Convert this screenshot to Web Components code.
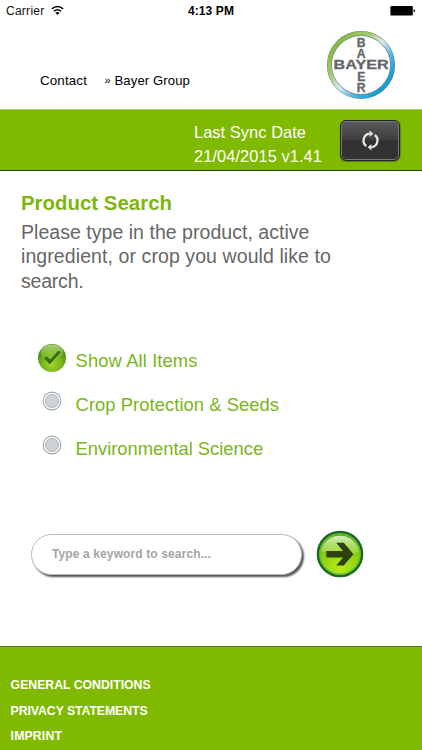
<!DOCTYPE html>
<html lang="en">
<head>
<meta charset="utf-8">
<title>Product Search</title>
<style>
html,body{margin:0;background:#fff}
body{font-family:"Liberation Sans",Arial,sans-serif;width:422px;height:750px;overflow:hidden}
</style>
</head>
<body>
<search-app></search-app>
<script>
const define=(name,html,ready)=>customElements.define(name,class extends HTMLElement{
  constructor(){super();this.attachShadow({mode:'open'}).innerHTML=html;}
  connectedCallback(){if(ready)ready.call(this);}
});

/* One line of text, tracked so that it fills the given measure. */
define('tracked-text',`<style>:host{display:block;white-space:nowrap}span{display:inline-block}</style><span><slot></slot></span>`,function(){
  const span=this.shadowRoot.querySelector('span');
  const n=this.textContent.length,w=span.getBoundingClientRect().width;
  if(this.hasAttribute('measure')&&w)span.style.letterSpacing=((+this.getAttribute('measure')-w)/n).toFixed(3)+'px';
});

define('status-bar',`<style>
:host{display:grid;grid-template-columns:1fr auto 1fr;height:22px;line-height:22px;font-size:12px;color:#111;padding:0 6px}
.l{display:flex;gap:6px}.t{font-weight:bold;color:#000}.r{display:flex;justify-content:flex-end}
svg{display:block}
</style>
<div class="l"><tracked-text measure="38.5">Carrier</tracked-text>
<svg width="13" height="22" viewBox="0 0 13 22" fill="none" stroke="#000" stroke-width="1.6"><path d="M.8 8.8Q6.5 4.2 12.2 8.8M3 11.1Q6.5 8.3 10 11.1"/><path d="M4.4 12.8Q6.5 11 8.6 12.8L6.5 15Z" fill="#000" stroke="none"/></svg></div>
<tracked-text class="t" measure="46">4:13 PM</tracked-text>
<div class="r"><svg width="26" height="22" viewBox="0 0 26 22"><rect x=".4" y="6" width="22.4" height="9.6" rx="1.2"/><path d="M23.6 9.3q1.5 .2 1.5 1.5t-1.5 1.5z"/></svg></div>`);

define('brand-logo',`<style>:host{display:block;width:70px;height:70px}svg{display:block}
text{font:bold 12.2px "Liberation Sans",Arial,sans-serif;fill:#63666a;stroke:#63666a;stroke-width:.3px}</style>
<svg width="70" height="70" viewBox="0 0 70 70">
<defs><linearGradient id="a" x1=".1" y1=".15" x2=".85" y2=".85"><stop offset="0" stop-color="#83b93c"/><stop offset=".3" stop-color="#a5cd72"/><stop offset=".52" stop-color="#d8edf4"/><stop offset=".75" stop-color="#54b5df"/><stop offset="1" stop-color="#159bd5"/></linearGradient></defs>
<circle cx="35" cy="35" r="31.6" fill="#fff" stroke="#75858a" stroke-width="5"/>
<circle cx="35" cy="35" r="31.6" fill="none" stroke="url(#a)" stroke-width="3.8"/>
<text x="7.6" y="39.2" textLength="55" lengthAdjust="spacingAndGlyphs">BAYER</text>
<g text-anchor="middle"><text x="35.2" y="17">B</text><text x="35.2" y="28.2">A</text><text x="35.2" y="50.8">E</text><text x="35.2" y="62">R</text></g>
</svg>`);

define('site-header',`<style>
:host{display:flex;height:87px;font-size:13.1px;color:#000}
nav{display:flex;padding:50px 0 0 40px;line-height:17px;width:327px;box-sizing:border-box}
.c{width:64.5px;font-size:13.4px}.q{width:10px;font-size:11px}
brand-logo{margin-top:8px;margin-left:-1px}
</style>
<nav><tracked-text class="c" measure="47">Contact</tracked-text><span class="q">»</span><tracked-text measure="75.5">Bayer Group</tracked-text></nav><brand-logo></brand-logo>`);

define('sync-button',`<style>
:host{display:block;width:60px;height:41px;box-sizing:border-box;border:1.5px solid #202124;border-radius:6px;background:linear-gradient(#58595b,#414143 45%,#303032 52%,#343436);box-shadow:inset 0 0 0 1px #77797a,0 1px 1px #5f7d20,1px 0 1px #5f8d10}
svg{display:block;margin:8.5px auto 0}
</style>
<svg width="21" height="21" viewBox="0 0 21 21" fill="none" stroke="#e6e6e6" stroke-width="2.3"><path d="M6.2 16A6.9 6.9 0 0 1 9.6 3.7"/><path d="M14.8 5A6.9 6.9 0 0 1 11.4 17.3"/><path d="M9.6 .6V7L13.4 3.7ZM11.4 14V20.4L7.6 17.3Z" fill="#e6e6e6" stroke="none"/></svg>`);

define('sync-bar',`<style>
:host{display:flex;height:62px;box-sizing:border-box;background:#80ba00;border-top:1px solid #a6d050;border-bottom:1px solid #2c4300;color:#fff;font-size:16.4px;line-height:24px;padding-left:194px}
.d{width:146px;padding-top:10px}sync-button{margin-top:10px}
</style>
<div class="d"><tracked-text measure="112">Last Sync Date</tracked-text><tracked-text measure="128">21/04/2015 v1.41</tracked-text></div><sync-button></sync-button>`);

define('search-intro',`<style>
:host{display:block;padding:20px 0 0 21px;height:159px;box-sizing:border-box}
.h{font-weight:bold;font-size:20.4px;line-height:24px;color:#7db610}
.p{font-size:19.5px;line-height:24.4px;color:#666;padding-top:5px}
</style>
<tracked-text class="h" measure="151">Product Search</tracked-text>
<div class="p"><tracked-text measure="288.5">Please type in the product, active</tracked-text><tracked-text measure="310">ingredient, or crop you would like to</tracked-text><tracked-text measure="62.5">search.</tracked-text></div>`);

define('radio-mark',`<style>:host{display:flex;width:30px;justify-content:center}svg{display:none;flex:none}:host([checked]) .on{display:block}:host(:not([checked])) .off{display:block}</style>
<svg class="on" width="30" height="30" viewBox="0 0 30 30"><defs><radialGradient id="g" cx=".5" cy=".72" r=".75"><stop offset="0" stop-color="#a6d72c"/><stop offset=".45" stop-color="#79b51d"/><stop offset=".8" stop-color="#4d9017"/><stop offset="1" stop-color="#3d7d12"/></radialGradient><linearGradient id="s" x2="0" y2="1"><stop stop-color="#d7efa8" stop-opacity=".75"/><stop offset="1" stop-color="#b7e155" stop-opacity=".05"/></linearGradient></defs>
<circle cx="15" cy="15" r="14" fill="url(#g)"/><ellipse cx="15" cy="9" rx="11.3" ry="7.5" fill="url(#s)"/><path d="M7 15.2L9.8 13.2L13 16.6L21.4 7.8L23.9 9.2L12.8 21.2Z" fill="#356d12"/></svg>
<svg class="off" width="20" height="20" viewBox="0 0 20 20"><circle cx="10" cy="10" r="8.9" fill="#fff" stroke="#a4a6a8" stroke-width="1.1"/><circle cx="10" cy="10" r="7.4" fill="#eceeef"/><circle cx="10" cy="10" r="6.4" fill="#cdd3d7" stroke="#a9adb0" stroke-width=".9"/></svg>`);

define('filter-option',`<style>
:host{display:flex;height:43.8px;color:#7ab51a;font-size:18.4px;line-height:24px;padding-left:37px}
tracked-text{margin-left:8.6px;padding-top:6px}
radio-mark{height:30px}:host(:not([checked])) radio-mark{padding-top:4.6px}
</style><radio-mark></radio-mark><tracked-text></tracked-text>`,function(){
  if(this.hasAttribute('checked'))this.shadowRoot.querySelector('radio-mark').setAttribute('checked','');
  const t=document.createElement('tracked-text');t.setAttribute('measure',this.getAttribute('measure'));t.textContent=this.textContent;
  this.shadowRoot.querySelector('tracked-text').replaceWith(t);
});

define('go-button',`<style>:host{display:block;width:48px;height:48px}svg{display:block}</style>
<svg width="48" height="48" viewBox="0 0 48 48"><defs><radialGradient id="g" cx=".5" cy=".8" r=".75"><stop offset="0" stop-color="#b4ed12"/><stop offset=".6" stop-color="#8bd010"/><stop offset="1" stop-color="#5baa19"/></radialGradient><linearGradient id="s" x2="0" y2="1"><stop stop-color="#e4f5d0" stop-opacity=".9"/><stop offset="1" stop-color="#b7e35a" stop-opacity=".4"/></linearGradient></defs>
<circle cx="24" cy="24" r="22" fill="url(#g)" stroke="#17691b" stroke-width="2.6"/><circle cx="24" cy="24" r="20.2" fill="none" stroke="#69b744" stroke-width="1.2"/>
<path d="M5 21.5A19.3 19 0 0 1 43 21.5Q35 26 24 24.5Q13 23 5 21.5Z" fill="url(#s)"/>
<path d="M10.3 21H27L20.2 12.8H27.8L37.5 24.3L27.8 35.6H20.2L27 27.6H10.3Z" fill="#2f420d"/></svg>`);

define('search-form',`<style>
:host{display:flex;padding-left:31px;gap:14px;height:48px;align-items:flex-start}
.f{width:271px;height:41px;margin-top:4px;box-sizing:border-box;border:1px solid #bbb;border-radius:21px;box-shadow:2px 2px 2px #555;padding:0 0 0 20px;font-weight:bold;font-size:12px;line-height:39px;color:#a5a5a5;background:#fff}
</style><div class="f"><tracked-text measure="159">Type a keyword to search...</tracked-text></div><go-button></go-button>`);

define('site-footer',`<style>
:host{display:block;height:104px;box-sizing:border-box;background:#80ba00;border-top:1px solid #587333;color:#fff;font-weight:bold;font-size:12.3px;line-height:25.5px;padding:26px 0 0 10.6px}
</style><tracked-text measure="140">GENERAL CONDITIONS</tracked-text><tracked-text measure="137">PRIVACY STATEMENTS</tracked-text><tracked-text measure="51.5">IMPRINT</tracked-text>`);

define('search-app',`<style>:host{display:flex;flex-direction:column;width:422px;height:750px}
.o{padding-top:13px;height:200px;box-sizing:border-box}site-footer{margin-top:auto}</style>
<status-bar></status-bar><site-header></site-header><sync-bar></sync-bar><search-intro></search-intro>
<div class="o"><filter-option checked measure="122">Show All Items</filter-option><filter-option measure="203.5">Crop Protection &amp; Seeds</filter-option><filter-option measure="187.5">Environmental Science</filter-option></div>
<search-form></search-form><site-footer></site-footer>`);
</script>
</body>
</html>
